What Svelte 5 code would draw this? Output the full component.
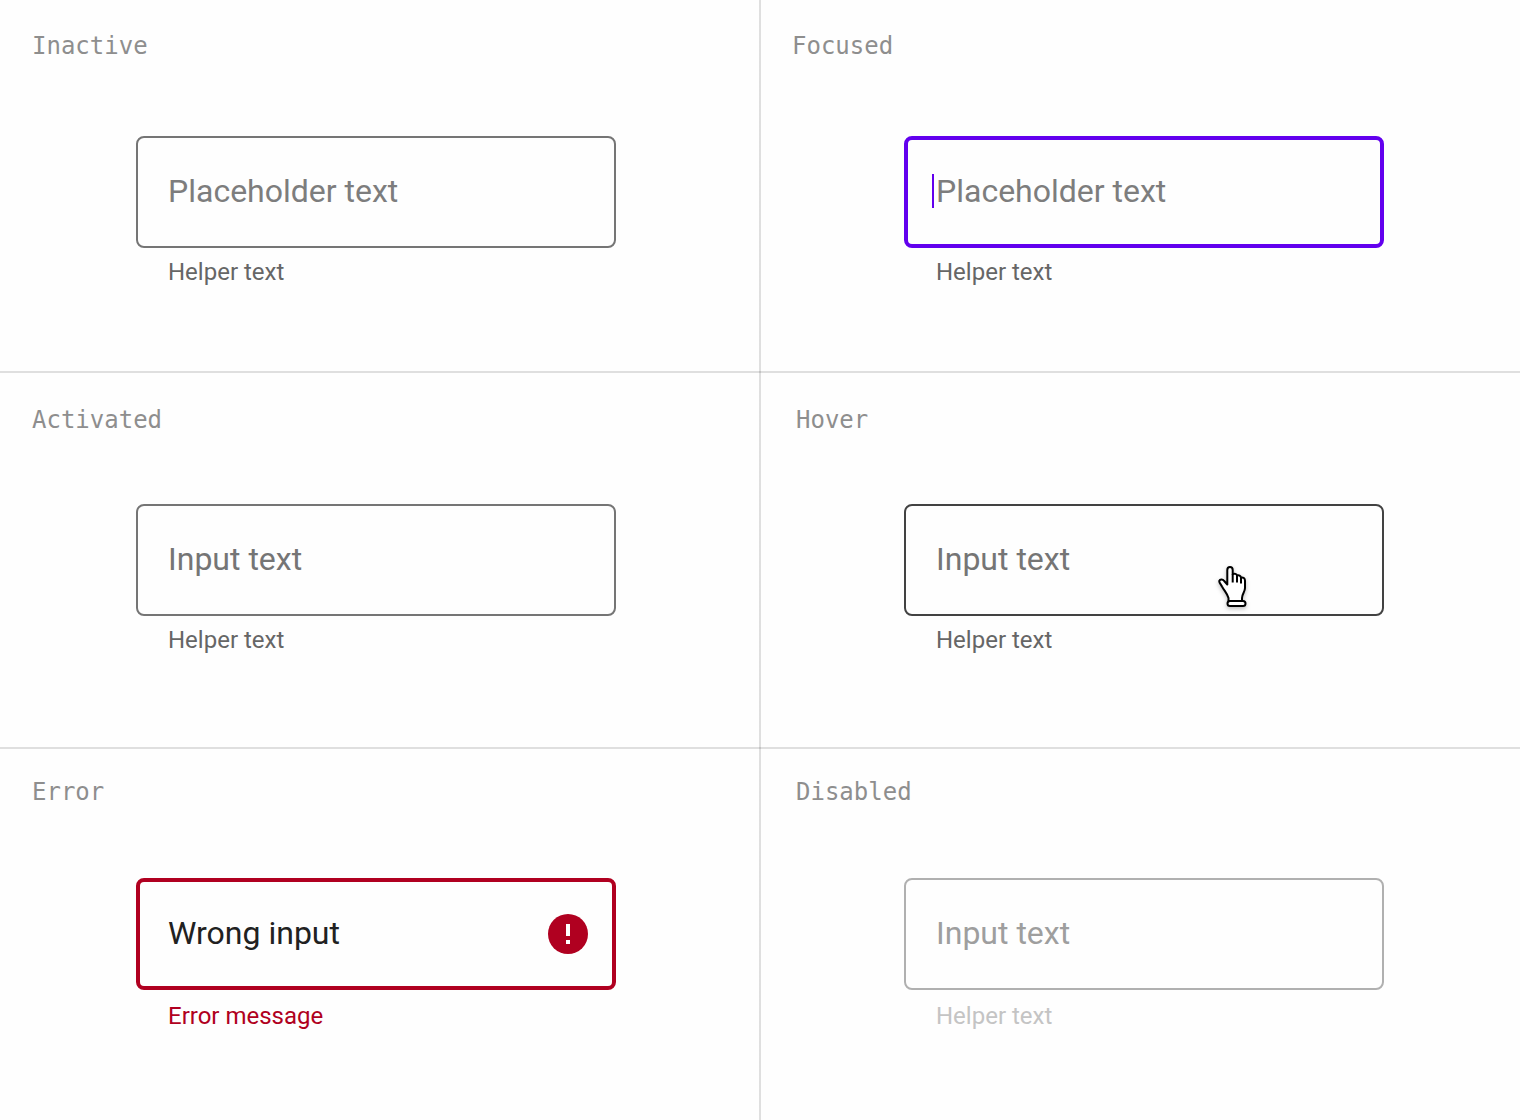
<script>
  const rows = [
    {
      name: 'first',
      fields: [
        { state: 'inactive', title: 'Inactive', placeholder: 'Placeholder text', value: '', helper: 'Helper text' },
        { state: 'focused', title: 'Focused', placeholder: 'Placeholder text', value: '', helper: 'Helper text' },
      ],
    },
    {
      name: 'second',
      fields: [
        { state: 'activated', title: 'Activated', placeholder: '', value: 'Input text', helper: 'Helper text' },
        { state: 'hover', title: 'Hover', placeholder: '', value: 'Input text', helper: 'Helper text' },
      ],
    },
    {
      name: 'third',
      fields: [
        { state: 'error', title: 'Error', placeholder: '', value: 'Wrong input', helper: 'Error message' },
        { state: 'disabled', title: 'Disabled', placeholder: '', value: 'Input text', helper: 'Helper text' },
      ],
    },
  ];
</script>

<main class="states">
  {#each rows as row}
    <div class="row {row.name}">
      {#each row.fields as field}
        <section class="cell {field.state}">
          <label class="title" for={field.state}>{field.title}</label>
          <div class="field">
            <div class="control">
              <input
                id={field.state}
                type="text"
                placeholder={field.placeholder}
                value={field.value}
                disabled={field.state === 'disabled'}
                aria-invalid={field.state === 'error'}
                aria-describedby="{field.state}-helper"
              />
              {#if field.state === 'focused'}
                <span class="caret"></span>
              {/if}
              {#if field.state === 'error'}
                <svg class="alert" viewBox="0 0 40 40" aria-hidden="true">
                  <circle cx="20" cy="20" r="20" fill="#b00020" />
                  <path d="M18 10h4v12h-4zM18 26h4v4h-4z" fill="#fff" />
                </svg>
              {/if}
              {#if field.state === 'hover'}
                <svg class="pointer" viewBox="0 0 40 48" aria-hidden="true">
                  <path
                    d="M14.5 37V34C13.5 30 10.5 27 8 22.5C6.8 20.2 4.8 18.5 5.3 16.8C6 14.8 8.8 15 10.2 17L13.3 20.5V6C13.3 4 14.4 3 16 3S18.7 4 18.7 6V10.2C20.5 9.2 22.5 9.8 23 11.5C25 10.8 26.6 11.8 27 13.5C29.3 13 31 14.4 31 16.8V24C31 28 28 30 28 34V37Z"
                    fill="#fff" stroke="#000" stroke-width="2" stroke-linejoin="round"
                  />
                  <path d="M18.7 10v8.5M23 11.5v7M27 13.5v6" fill="none" stroke="#000" stroke-width="2" />
                  <rect x="13.5" y="37" width="18" height="5" rx="2.5" fill="#fff" stroke="#000" stroke-width="2" />
                </svg>
              {/if}
            </div>
            <p class="helper" id="{field.state}-helper">{field.helper}</p>
          </div>
        </section>
      {/each}
    </div>
  {/each}
</main>

<style>
  :global(body) {
    background: #fefefe;
  }

  .states {
    min-height: 100vh;
    font-family: Roboto, 'Liberation Sans', sans-serif;
    background: linear-gradient(rgba(0, 0, 0, 0.12), rgba(0, 0, 0, 0.12)) center / 2px 100% no-repeat;
  }

  .row {
    display: grid;
    grid-template-columns: 1fr 1fr;
    border-bottom: 2px solid rgba(0, 0, 0, 0.12);
  }

  .row.third {
    border-bottom: 0;
  }

  .cell {
    display: flex;
    flex-direction: column;
    min-width: 0;
    gap: 68px;
    padding: 31px 0 91px;
  }

  .first .cell {
    gap: 74px;
    padding: 30px 0 83px;
  }

  .third .cell {
    gap: 70px;
    padding: 27px 0 88px;
  }

  .title {
    padding-left: 32px;
    color: #8e8e8e;
    font: 24px/32px 'DejaVu Sans Mono', monospace;
  }

  .hover .title,
  .disabled .title {
    padding-left: 36px;
  }

  .field {
    margin: 0 144px 0 136px;
  }

  .cell:nth-child(2) .field {
    margin: 0 136px 0 144px;
  }

  .control {
    position: relative;
  }

  input {
    display: block;
    box-sizing: border-box;
    width: 100%;
    height: 112px;
    margin: 0;
    padding: 0 30px 2px;
    border: 2px solid #757575;
    border-radius: 8px;
    outline: 0;
    background: transparent;
    color: #757575;
    font: 32px/40px Roboto, 'Liberation Sans', sans-serif;
  }

  input::placeholder {
    color: #7d7d7d;
    opacity: 1;
  }

  .focused input,
  .error input {
    padding: 0 28px 2px;
    border-width: 4px;
  }

  .focused input {
    border-color: #6200ee;
  }

  .hover input {
    border-color: #424242;
    cursor: pointer;
  }

  .error input {
    padding-right: 80px;
    border-color: #b00020;
    color: #212121;
  }

  .disabled input {
    border-color: #b0b0b0;
    color: #9e9e9e;
  }

  .caret {
    position: absolute;
    top: 38px;
    left: 28px;
    width: 2px;
    height: 34px;
    background: #6200ee;
  }

  .alert {
    position: absolute;
    top: 36px;
    right: 28px;
    width: 40px;
    height: 40px;
  }

  .pointer {
    position: absolute;
    top: 60px;
    right: 130px;
    width: 40px;
    height: 48px;
    filter: drop-shadow(0 2px 2px rgba(0, 0, 0, 0.25));
    pointer-events: none;
  }

  .helper {
    margin: 8px 0 0;
    padding-left: 32px;
    color: #666;
    font-size: 24px;
    line-height: 32px;
  }

  .third .helper {
    margin-top: 10px;
  }

  .error .helper {
    color: #b00020;
  }

  .disabled .helper {
    color: #c4c4c4;
  }
</style>
